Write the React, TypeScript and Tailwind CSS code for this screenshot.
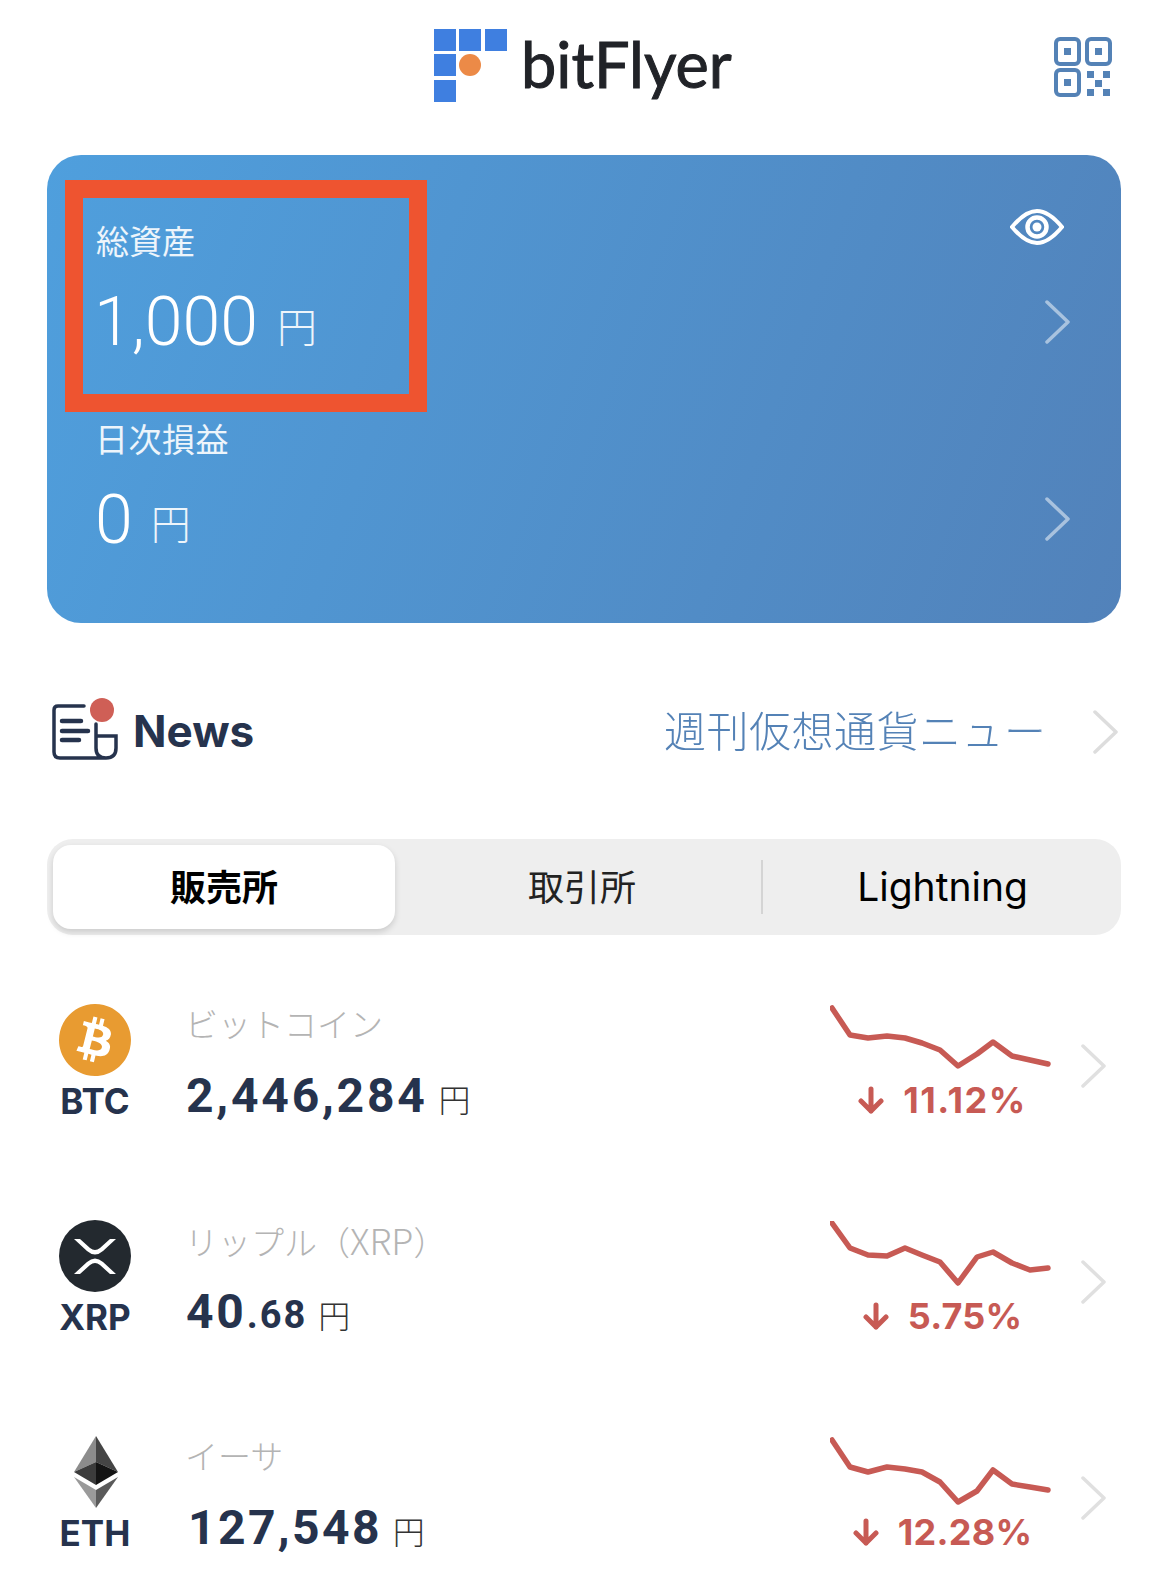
import { SiBitcoin } from 'react-icons/si'

const jp = "font-['Noto_Sans_CJK_JP',sans-serif]"

function Chevron({ className }: { className: string }) {
  return (
    <svg viewBox="0 0 26 44" className={className} fill="none" stroke="currentColor" strokeWidth="3.5" strokeLinecap="round" strokeLinejoin="round">
      <path d="M3 2 L24 22 L3 42" />
    </svg>
  )
}

function Logo() {
  return (
    <svg viewBox="0 0 73 73" className="w-[73px] h-[73px]">
      <rect x="0" y="0" width="22" height="22" fill="#3f7fe0" />
      <rect x="25" y="0" width="22" height="22" fill="#3f7fe0" />
      <rect x="51" y="0" width="22" height="22" fill="#3f7fe0" />
      <rect x="0" y="25" width="22" height="22" fill="#3f7fe0" />
      <rect x="0" y="51" width="22" height="22" fill="#3f7fe0" />
      <circle cx="36" cy="36" r="11" fill="#ec8a47" />
    </svg>
  )
}

function QrIcon() {
  return (
    <svg viewBox="0 0 58 60" className="w-[58px] h-[60px]" fill="none" stroke="#5482b6" strokeWidth="4">
      <rect x="2" y="2" width="23" height="25" rx="4" />
      <rect x="33" y="2" width="23" height="25" rx="4" />
      <rect x="2" y="33" width="23" height="25" rx="4" />
      <g fill="#5482b6" stroke="none">
        <rect x="10" y="11" width="7" height="7" />
        <rect x="41" y="11" width="7" height="7" />
        <rect x="10" y="42" width="7" height="7" />
        <rect x="33" y="34" width="7" height="7" />
        <rect x="49" y="34" width="7" height="7" />
        <rect x="41" y="43" width="7" height="7" />
        <rect x="33" y="52" width="7" height="7" />
        <rect x="49" y="52" width="7" height="7" />
      </g>
    </svg>
  )
}

function EyeIcon() {
  return (
    <svg viewBox="0 0 54 36" className="w-[54px] h-[36px]" fill="none" stroke="white" strokeWidth="4">
      <path d="M2 18 C 12 6, 20 2, 27 2 C 34 2, 42 6, 52 18 C 42 30, 34 34, 27 34 C 20 34, 12 30, 2 18 Z" />
      <circle cx="27" cy="18" r="9.5" strokeWidth="4.5" />
      <circle cx="27" cy="18" r="4.5" fill="white" stroke="none" />
    </svg>
  )
}

function NewsIcon() {
  return (
    <svg viewBox="0 0 66 64" className="w-[66px] h-[64px]" fill="none" stroke="#26334d" strokeWidth="3.5" strokeLinecap="round">
      <path d="M32 8 H6 Q2 8 2 12 V54 Q2 60 8 60 H54 Q64 60 64 50 V38 H44 V26 M44 38 V50 Q44 60 54 60" />
      <path d="M10 23 H29 M10 33 H36 M10 42 H27" strokeWidth="4.5" />
      <circle cx="50" cy="12" r="12" fill="#cf5f56" stroke="none" />
    </svg>
  )
}

function BtcIcon() {
  return (
    <div className="w-[72px] h-[72px] rounded-full bg-white">
      <SiBitcoin className="w-[72px] h-[72px] text-[#e89b31]" />
    </div>
  )
}

function XrpIcon() {
  return (
    <svg viewBox="0 0 72 72" className="w-[72px] h-[72px]">
      <circle cx="36" cy="36" r="36" fill="#23292f" />
      <path fill="white" d="M15 19 H21 L31 28 Q36 32 41 28 L51 19 H57 L44 31 Q36 38 28 31 Z" />
      <path fill="white" d="M15 54 H21 L31 45 Q36 41 41 45 L51 54 H57 L44 42 Q36 35 28 42 Z" />
    </svg>
  )
}

function EthIcon() {
  return (
    <svg viewBox="0 0 44 72" className="ml-[1px] w-[44px] h-[72px]">
      <polygon points="22,0 0,36 22,26" fill="#8c8c8c" />
      <polygon points="22,0 44,36 22,26" fill="#454545" />
      <polygon points="0,36 22,26 22,49" fill="#3c3c3c" />
      <polygon points="44,36 22,26 22,49" fill="#141414" />
      <polygon points="0,41 22,54 22,72" fill="#9a9a9a" />
      <polygon points="44,41 22,54 22,72" fill="#5a5a5a" />
    </svg>
  )
}

function Spark({ points }: { points: string }) {
  return (
    <svg viewBox="0 0 224 70" className="w-[224px] h-[70px]" fill="none" stroke="#c75a54" strokeWidth="5.5" strokeLinecap="round" strokeLinejoin="round">
      <polyline points={points} />
    </svg>
  )
}

function DownArrow() {
  return (
    <svg viewBox="0 0 28 28" className="w-[28px] h-[28px]" fill="none" stroke="#c75a54" strokeWidth="5" strokeLinecap="round" strokeLinejoin="round">
      <path d="M14 3 V25 M4 15 L14 25 L24 15" />
    </svg>
  )
}

const coins = [
  {
    symbol: 'BTC',
    icon: <BtcIcon />,
    name: 'ビットコイン',
    price: <span>2,446,284</span>,
    pct: '11.12%',
    pctClass: 'tracking-[1.5px]',
    spark: '2,3 20,30 38,33 57,31 75,33 92,38 110,45 128,61 147,49 163,37 182,51 200,55 218,59',
  },
  {
    symbol: 'XRP',
    icon: <XrpIcon />,
    name: (
      <>
        リップル（<span className="text-[36px]">XRP</span>）
      </>
    ),
    price: (
      <span>
        40<span className="text-[38px] tracking-[2px]">.68</span>
      </span>
    ),
    pct: '5.75%',
    pctClass: 'tracking-[0.2px]',
    spark: '2,2 20,27 38,34 57,35 75,27 92,34 110,41 128,62 147,36 163,31 182,42 200,49 218,47',
  },
  {
    symbol: 'ETH',
    icon: <EthIcon />,
    name: 'イーサ',
    price: <span className="ml-[2px] tracking-[2.4px]">127,548</span>,
    pct: '12.28%',
    pctClass: 'tracking-[0.3px]',
    spark: '2,3 20,30 38,35 57,30 75,32 92,35 110,45 128,65 147,54 163,33 182,47 200,50 218,53',
  },
]

export default function App() {
  return (
    <div className={`w-[1169px] h-[1578px] overflow-hidden bg-white ${jp}`}>
      <header className="h-[155px] flex items-start pt-[29px]">
        <div className="ml-[434px] flex items-start">
          <Logo />
          <span className="ml-[14px] -mt-[7px] text-[63px] leading-[84px] font-[Lato,sans-serif] text-[#212328] [-webkit-text-stroke:1px_#212328]">bitFlyer</span>
        </div>
        <div className="ml-auto mr-[57px] mt-[8px]">
          <QrIcon />
        </div>
      </header>

      <section className="ml-[47px] mr-[48px] h-[468px] rounded-[34px] bg-[linear-gradient(110deg,#4f9fdd,#5282ba)] pl-[18px] pt-[25px] text-white">
        <div className="flex items-start">
          <div className="w-[362px] h-[232px] border-[18px] border-[#ee5430] pl-[13px] pt-[19px]">
            <div className="text-[33px] leading-[46px] text-white/90">総資産</div>
            <div className="mt-[19px] flex items-baseline">
              <span className="-ml-[2px] text-[68px] leading-[80px] font-[350] font-[Roboto,sans-serif]">1,000</span>
              <span className="ml-[19px] -translate-y-[3px] text-[40px] leading-[50px] font-light text-white/90">円</span>
            </div>
          </div>
          <div className="ml-[583px] flex flex-col items-start">
            <div className="mt-[29px]"><EyeIcon /></div>
            <Chevron className="mt-[55px] ml-[34px] w-[26px] h-[44px] text-white/50" />
          </div>
        </div>
        <div className="flex items-start pl-[30px] mt-[3px]">
          <div className="w-[949px]">
            <div className="text-[33px] leading-[46px] tracking-[0.5px] text-white/90">日次損益</div>
            <div className="mt-[19px] flex items-baseline">
              <span className="text-[68px] leading-[80px] font-[350] font-[Roboto,sans-serif]">0</span>
              <span className="ml-[18px] -translate-y-[4px] text-[40px] leading-[50px] font-light text-white/90">円</span>
            </div>
          </div>
          <Chevron className="mt-[82px] w-[26px] h-[44px] text-white/50" />
        </div>
      </section>

      <section className="ml-[47px] mr-[48px] mt-[75px] h-[64px] flex items-center">
        <div className="ml-[5px]"><NewsIcon /></div>
        <span className="ml-[15px] mt-[1px] text-[44px] font-bold font-[Inter,sans-serif] text-[#26334d]">News</span>
        <div className="ml-auto -mt-[3px] w-[386px] overflow-hidden whitespace-nowrap text-[42px] leading-[64px] tracking-[0.5px] font-light text-[#5482b6] [mask-image:linear-gradient(to_right,black_97%,transparent)]">週刊仮想通貨ニュース</div>
        <Chevron className="ml-[42px] mr-[3px] mt-[4px] w-[26px] h-[44px] text-[#dddddd]" />
      </section>

      <div className="ml-[47px] mr-[48px] mt-[77px] h-[96px] rounded-[26px] bg-[#eeeeee] p-[6px] flex items-stretch text-[36px]">
        <div className="w-[342px] pb-[5px] rounded-[18px] bg-white shadow-[0_3px_6px_rgba(0,0,0,0.15)] flex items-center justify-center font-bold text-black">販売所</div>
        <div className="w-[366px] pl-[8px] pb-[4px] flex items-center justify-center text-[#222222]">取引所</div>
        <div className="my-[15px] w-[2px] bg-[#d4d4d4]" />
        <div className="flex-1 pl-[7px] flex items-center justify-center text-[39px] font-[Inter,sans-serif] text-black">Lightning</div>
      </div>

      <div className="mx-[47px] mt-[69px]">
        {coins.map((c) => (
          <div key={c.symbol} className="h-[216px] flex items-start">
            <div className="w-[96px] flex flex-col items-center">
              {c.icon}
              <span className="mt-[5px] text-[35px] leading-[40px] font-bold font-[Inter,sans-serif] text-[#26334d]">{c.symbol}</span>
            </div>
            <div className="ml-[42px] w-[643px]">
              <div className="-mt-[4px] h-[46px] text-[33px] leading-[46px] font-light text-[#b4b4b4]">{c.name}</div>
              <div className="mt-[20px] flex items-baseline">
                <span className="ml-[1px] text-[48px] leading-[60px] font-bold tracking-[2.8px] font-[Roboto,sans-serif] text-[#26334d]">{c.price}</span>
                <span className="ml-[11px] text-[32px] leading-[46px] font-light text-[#333333]">円</span>
              </div>
            </div>
            <div className="w-[224px] flex flex-col items-center ml-[2px] mt-[1px]">
              <Spark points={c.spark} />
              <div className="mt-[5px] flex items-center gap-[18px]">
                <DownArrow />
                <span className={`text-[36px] leading-[40px] font-bold font-[Inter,sans-serif] text-[#c75a54] ${c.pctClass}`}>{c.pct}</span>
              </div>
            </div>
            <Chevron className="mt-[40px] ml-[26px] w-[26px] h-[44px] text-[#e0e0e0]" />
          </div>
        ))}
      </div>
    </div>
  )
}
